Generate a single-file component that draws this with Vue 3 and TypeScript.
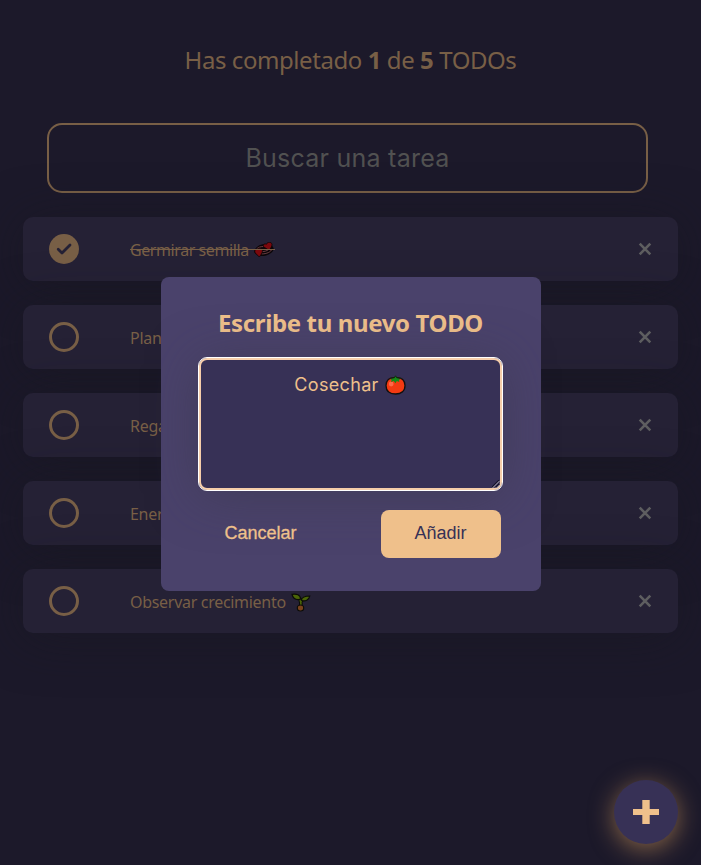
<script setup lang="ts">
import { ref, computed } from 'vue'

interface Todo {
  text: string
  completed: boolean
  icon?: 'hearts' | 'sprout'
}

const todos = ref<Todo[]>([
  { text: 'Germirar semilla', completed: true, icon: 'hearts' },
  { text: 'Plantar semilla', completed: false },
  { text: 'Regar planta', completed: false },
  { text: 'Energizar planta', completed: false },
  { text: 'Observar crecimiento', completed: false, icon: 'sprout' },
])

const completed = computed(() => todos.value.filter((t) => t.completed).length)
const newTodo = ref('Cosechar')

function toggle(todo: Todo) {
  todo.completed = !todo.completed
}
function remove(index: number) {
  todos.value.splice(index, 1)
}
</script>

<template>
  <main class="page">
    <h1 class="counter">
      Has completado <b>{{ completed }}</b> de <b>{{ todos.length }}</b> TODOs
    </h1>
    <input class="search" placeholder="Buscar una tarea" />
    <ul class="list">
      <li v-for="(todo, i) in todos" :key="i" class="card">
        <span class="check" :class="{ done: todo.completed }" @click="toggle(todo)">
          <svg v-if="todo.completed" width="30" height="30" viewBox="0 0 30 30">
            <path d="M9.2 15.2 13 19l8-8" />
          </svg>
        </span>
        <p class="label" :class="{ struck: todo.completed }">
          <span class="words">{{ todo.text }}</span>
          <svg v-if="todo.icon === 'hearts'" class="emoji" width="20" height="16" viewBox="0 0 20 16">
            <ellipse cx="10" cy="8" rx="8.6" ry="4.6" transform="rotate(-12 10 8)" fill="#0a0508" stroke="#0a0508" stroke-width="2.4" />
            <path d="M7.5 11.9c5 .1 9.8-2 10.3-4.9M2.4 7.3C4 5.4 6.6 4.5 9.6 4.5M8 9.6c2.6 0 5-.8 6.6-2" fill="none" stroke="#78454a" stroke-width=".9" />
            <path d="M15 8.3 9.6 4.8C8.4 3 10.2 1.2 12.4 2.2 13.3-.2 17.4-.3 18 2.2 18.2 4.7 16.4 6.6 15 8.3Z" fill="#7c080d" stroke="#0a0508" stroke-width=".8" />
            <path d="M5.3 15 1.5 11.2C0 9.3.9 6.9 3.1 7.4 4.1 5.5 7.9 5.8 8.4 8.3 8.7 10.8 6.8 13 5.3 15Z" fill="#7c080d" stroke="#0a0508" stroke-width=".8" />
          </svg>
          <svg v-if="todo.icon === 'sprout'" class="emoji sprout" width="20" height="19" viewBox="0 0 20 19">
            <path d="M9.7 14.5C10.2 11 9.8 8 9 5.7M9.8 8.6 12 6" fill="none" stroke="#0b0c08" stroke-width="3.6" />
            <path d="M9.7 14.5C10.2 11 9.8 8 9 5.7M9.8 8.6 12 6" fill="none" stroke="#4b6508" stroke-width="1.6" />
            <path d="M1 1.3C5.5.5 9.4 1.5 9.7 6.2 5.2 7.2 2 5.7 1 1.3ZM10.4 7.3C10.8 3.6 14 3 18.8 3 18 6.8 14.4 9.1 10.4 7.3Z" fill="#4b6508" stroke="#0b0c08" stroke-width="1.2" />
            <ellipse cx="9.5" cy="15" rx="3.2" ry="3" fill="#78421b" stroke="#0b0c08" stroke-width="1.1" />
          </svg>
        </p>
        <svg class="remove" width="14" height="14" viewBox="0 0 14 14" @click="remove(i)">
          <path d="M1.7 1.7 12.3 12.3M12.3 1.7 1.7 12.3" />
        </svg>
      </li>
    </ul>

    <div class="overlay">
      <form class="modal" @submit.prevent>
        <h2 class="title">Escribe tu nuevo TODO</h2>
        <div class="field" tabindex="0">
          <span class="value">{{ newTodo }}</span>
          <svg class="tomato" width="21" height="20" viewBox="0 0 21 20">
            <path d="M10.5 2.7C17 1.9 20 5.6 20 10.5c0 5.7-4 8.5-9.5 8.5S1 16.2 1 10.5C1 5.6 4 1.9 10.5 2.7Z" fill="#f33a12" stroke="#12100f" stroke-width="1.3" />
            <circle cx="6.2" cy="9" r="2.4" fill="#ff6849" />
            <path d="M10.5 1 11.6 2.8 15.7 3.7 14 5.1 14.3 7 11.8 6.1 10.4 8.2 8.8 6.1 6 7 6.7 5.1 5 3.8 9.4 2.9Z" fill="#138a18" />
            <path d="M5.2 3.6 9.3 2.7 10.5.8 11.8 2.7 15.8 3.6" fill="none" stroke="#122b11" stroke-width="1" />
          </svg>
          <svg class="grip" width="8" height="8" viewBox="0 0 8 8">
            <path d="M0 7.5 7.5 0M4 7.5 7.5 4" stroke="#15122a" stroke-width="1.8" />
            <path d="M.5 8 8 .5M4.5 8 8 4.5" stroke="#d0cdd8" stroke-width=".9" />
          </svg>
        </div>
        <div class="actions">
          <button type="button" class="btn cancel"><span>Cancelar</span></button>
          <button type="submit" class="btn add"><span>Añadir</span></button>
        </div>
      </form>
    </div>

    <button class="fab" aria-label="Añadir">
      <svg width="26" height="24" viewBox="0 0 26 24">
        <path d="M9.3 0h7.4v9H26v6h-9.3v9H9.3v-9H0V9h9.3Z" fill="#efc08b" />
      </svg>
    </button>
  </main>
</template>

<style>
body {
  margin: 0;
  background: #1c192a;
}
</style>

<style scoped>
.page {
  position: relative;
  box-sizing: border-box;
  width: 100%;
  height: 865px;
  padding: 44px 23px 0;
  overflow: hidden;
  background: #1c192a;
  color: #785f46;
  font-family: "Noto Sans", sans-serif;
}
.counter {
  margin: 0;
  height: 32px;
  line-height: 32px;
  text-align: center;
  font-size: 24px;
  font-weight: 400;
  white-space: nowrap;
  letter-spacing: -0.43px;
}
.search {
  display: block;
  box-sizing: border-box;
  width: 601px;
  height: 70px;
  margin: 47px 0 24px 24px;
  padding: 0;
  border: 2px solid #785f46;
  border-radius: 15px;
  outline: none;
  background: transparent;
  color: #785f46;
  text-align: center;
  font: 400 25px Inter, sans-serif;
  letter-spacing: 0.25px;
}
.search::placeholder {
  color: #515151;
  opacity: 1;
}
.list {
  display: flex;
  flex-direction: column;
  gap: 24px;
  margin: 0;
  padding: 0;
  list-style: none;
}
.card {
  display: flex;
  align-items: center;
  box-sizing: border-box;
  height: 64px;
  padding: 0 26px;
  border-radius: 10px;
  background: #252135;
  box-shadow: 0 5px 50px rgba(24, 23, 31, 0.5);
}
.check {
  box-sizing: border-box;
  width: 30px;
  height: 30px;
  border: 3px solid #785f46;
  border-radius: 50%;
}
.check.done {
  border: 0;
  background: #785f46;
}
.check path {
  fill: none;
  stroke: #252135;
  stroke-width: 2.8;
  stroke-linecap: round;
  stroke-linejoin: round;
}
.label {
  display: flex;
  align-items: center;
  position: relative;
  flex: 1;
  gap: 5px;
  margin: 2px 0 0 51px;
  font-size: 16px;
  line-height: 22px;
  letter-spacing: -0.3px;
}
.struck {
  letter-spacing: -0.42px;
}
.struck::after {
  content: "";
  position: absolute;
  left: 0;
  top: 10px;
  width: 145px;
  height: 1px;
  background: #785f46;
}
.emoji {
  display: block;
}
.remove {
  fill: none;
  stroke: #5e5e60;
  stroke-width: 2.6;
}
.overlay {
  position: absolute;
  inset: 0;
  display: flex;
  align-items: center;
  justify-content: center;
}
.modal {
  display: flex;
  flex-direction: column;
  box-sizing: border-box;
  width: 380px;
  height: 314px;
  margin-top: 3px;
  padding: 30px 37px 33px;
  border-radius: 8px;
  background: #4a426b;
}
.title {
  margin: 0;
  height: 32px;
  line-height: 32px;
  text-align: center;
  color: #efc08b;
  font-size: 24px;
  font-weight: 700;
  white-space: nowrap;
  letter-spacing: -0.37px;
}
.field {
  position: relative;
  display: flex;
  justify-content: center;
  align-items: flex-start;
  gap: 6px;
  box-sizing: border-box;
  width: 303px;
  height: 132px;
  margin: 19px 1px 20px;
  padding-top: 12px;
  border: 2px solid #f6ceaa;
  border-radius: 8px;
  outline: 1px solid #fff;
  background: #373156;
  box-shadow: 0 5px 50px rgba(56, 53, 70, 0.5);
  color: #efc08b;
  font: 400 18px/26px Inter, sans-serif;
}
.value {
  letter-spacing: 0.32px;
}
.tomato {
  margin-top: 3px;
}
.grip {
  position: absolute;
  right: 0;
  bottom: 0;
}
.actions {
  position: relative;
  display: flex;
  justify-content: space-between;
  padding-right: 3px;
  margin-left: 3px;
}
.btn {
  width: 120px;
  height: 48px;
  padding: 0 0 2px;
  border: 0;
  border-radius: 8px;
  font: 400 18px/22px "Liberation Sans", Arial, sans-serif;
}
.cancel {
  background: transparent;
  color: #efc08b;
  -webkit-text-stroke: 0.3px #efc08b;
}
.add {
  background: #efc08b;
  color: #373156;
}
.fab {
  position: absolute;
  right: 23px;
  bottom: 21px;
  display: flex;
  align-items: center;
  justify-content: center;
  width: 64px;
  height: 64px;
  padding: 0;
  border: 0;
  border-radius: 50%;
  background: #373156;
  box-shadow: 0 5px 25px rgba(239, 174, 98, 0.5);
}
</style>
